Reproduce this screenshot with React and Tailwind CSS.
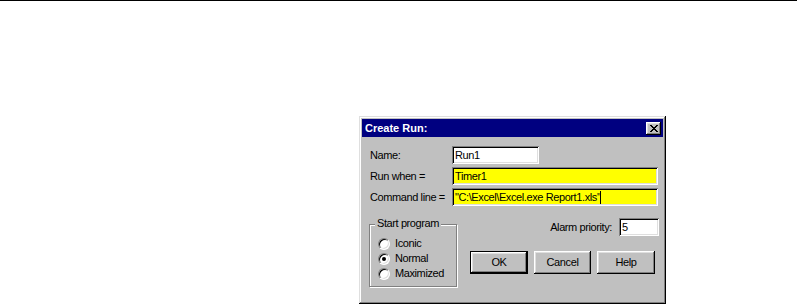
import React from 'react';

const sunken =
  'shadow-[inset_1px_1px_#808080,inset_-1px_-1px_#fff,inset_2px_2px_#000,inset_-2px_-2px_#dfdfdf]';
const raised =
  'shadow-[inset_-1px_-1px_#000,inset_1px_1px_#fff,inset_-2px_-2px_#808080,inset_2px_2px_#dfdfdf]';

const Field = ({ value, width, yellow, caret }) => (
  <div
    className={`h-[18px] ${width} ${yellow ? 'bg-[#ffff00]' : 'bg-white'} ${sunken} flex items-center pl-[3px] overflow-hidden`}
  >
    <span className="whitespace-pre leading-none">{value}</span>
    {caret && <span className="w-px h-[13px] bg-black" />}
  </div>
);

const Radio = ({ label, checked }) => (
  <div className="flex items-center h-[15px]">
    <div className="w-[12px] h-[12px] rounded-full bg-white border border-t-[#808080] border-l-[#808080] border-b-white border-r-white shadow-[inset_1px_1px_#000,inset_-1px_-1px_#dfdfdf] flex items-center justify-center">
      {checked && <div className="w-[4px] h-[4px] rounded-full bg-black" />}
    </div>
    <span className="ml-[5px] leading-none">{label}</span>
  </div>
);

const Button = ({ children, isDefault, width }) =>
  isDefault ? (
    <div className={`${width} h-[23px] border border-black`}>
      <div className={`w-full h-full bg-[#c0c0c0] ${raised} flex items-center justify-center`}>
        {children}
      </div>
    </div>
  ) : (
    <div className={`${width} h-[23px] bg-[#c0c0c0] ${raised} flex items-center justify-center`}>
      {children}
    </div>
  );

const App = () => {
  return (
    <div
      className="w-[811px] h-[306px] bg-white overflow-hidden text-black"
      style={{ fontFamily: '"Liberation Sans", Arial, sans-serif' }}
    >
      {/* rule at top of the page */}
      <div className="h-[1px] w-[797px] bg-black" />

      <div className="pt-[115px] pl-[359px]">
        {/* Dialog */}
        <div className="w-[307px] h-[188px] bg-[#c0c0c0] p-[3px] shadow-[inset_-1px_-1px_#000,inset_1px_1px_#dfdfdf,inset_-2px_-2px_#808080,inset_2px_2px_#fff]">
          {/* Title bar */}
          <div className="h-[18px] bg-[#000080] flex items-center justify-between pl-[3px] pr-[2px]">
            <span className="text-white font-bold text-[11px] leading-none">Create Run:</span>
            <div className={`w-[15px] h-[13px] bg-[#c0c0c0] ${raised} flex items-center justify-center`}>
              <svg width="8" height="7" viewBox="0 0 8 7" shapeRendering="crispEdges">
                <path
                  d="M0 0h2v1H0zM6 0h2v1H6zM1 1h2v1H1zM5 1h2v1H5zM2 2h4v1H2zM3 3h2v1H3zM2 4h4v1H2zM1 5h2v1H1zM5 5h2v1H5zM0 6h2v1H0zM6 6h2v1H6z"
                  fill="#000"
                />
              </svg>
            </div>
          </div>

          {/* Body */}
          <div className="pl-[8px] pr-[4px] pt-[9px] text-[11px] tracking-[-0.4px]">
            <div className="flex flex-col gap-[3px]">
              <div className="flex items-center">
                <span className="w-[82px]">Name:</span>
                <Field value="Run1" width="w-[87px]" />
              </div>
              <div className="flex items-center">
                <span className="w-[82px]">Run when =</span>
                <Field value="Timer1" width="w-[206px]" yellow />
              </div>
              <div className="flex items-center">
                <span className="w-[82px]">Command line =</span>
                <Field value={'"C:\\Excel\\Excel.exe Report1.xls"'} width="w-[206px]" yellow caret />
              </div>
            </div>

            <div className="flex mt-[12px]">
              {/* Start program group */}
              <div className="ml-[-1px] pt-[6px]">
                <div className="relative w-[88px] h-[63px] border border-[#808080] shadow-[1px_1px_#fff,inset_1px_1px_#fff] pt-[11px] pl-[8px]">
                  <span className="absolute -top-[7px] left-[5px] bg-[#c0c0c0] px-[2px] leading-none">
                    Start program
                  </span>
                  <Radio label="Iconic" />
                  <Radio label="Normal" checked />
                  <Radio label="Maximized" />
                </div>
              </div>

              <div className="flex-1 flex flex-col items-end">
                <div className="flex items-center">
                  <span className="mr-[7px]">Alarm priority:</span>
                  <Field value="5" width="w-[40px]" />
                </div>
                <div className="flex gap-[6px] mt-[15px] mr-[4px]">
                  <Button isDefault width="w-[58px]">OK</Button>
                  <Button width="w-[57px]">Cancel</Button>
                  <Button width="w-[58px]">Help</Button>
                </div>
              </div>
            </div>
          </div>
        </div>
      </div>
    </div>
  );
};

export default App;
